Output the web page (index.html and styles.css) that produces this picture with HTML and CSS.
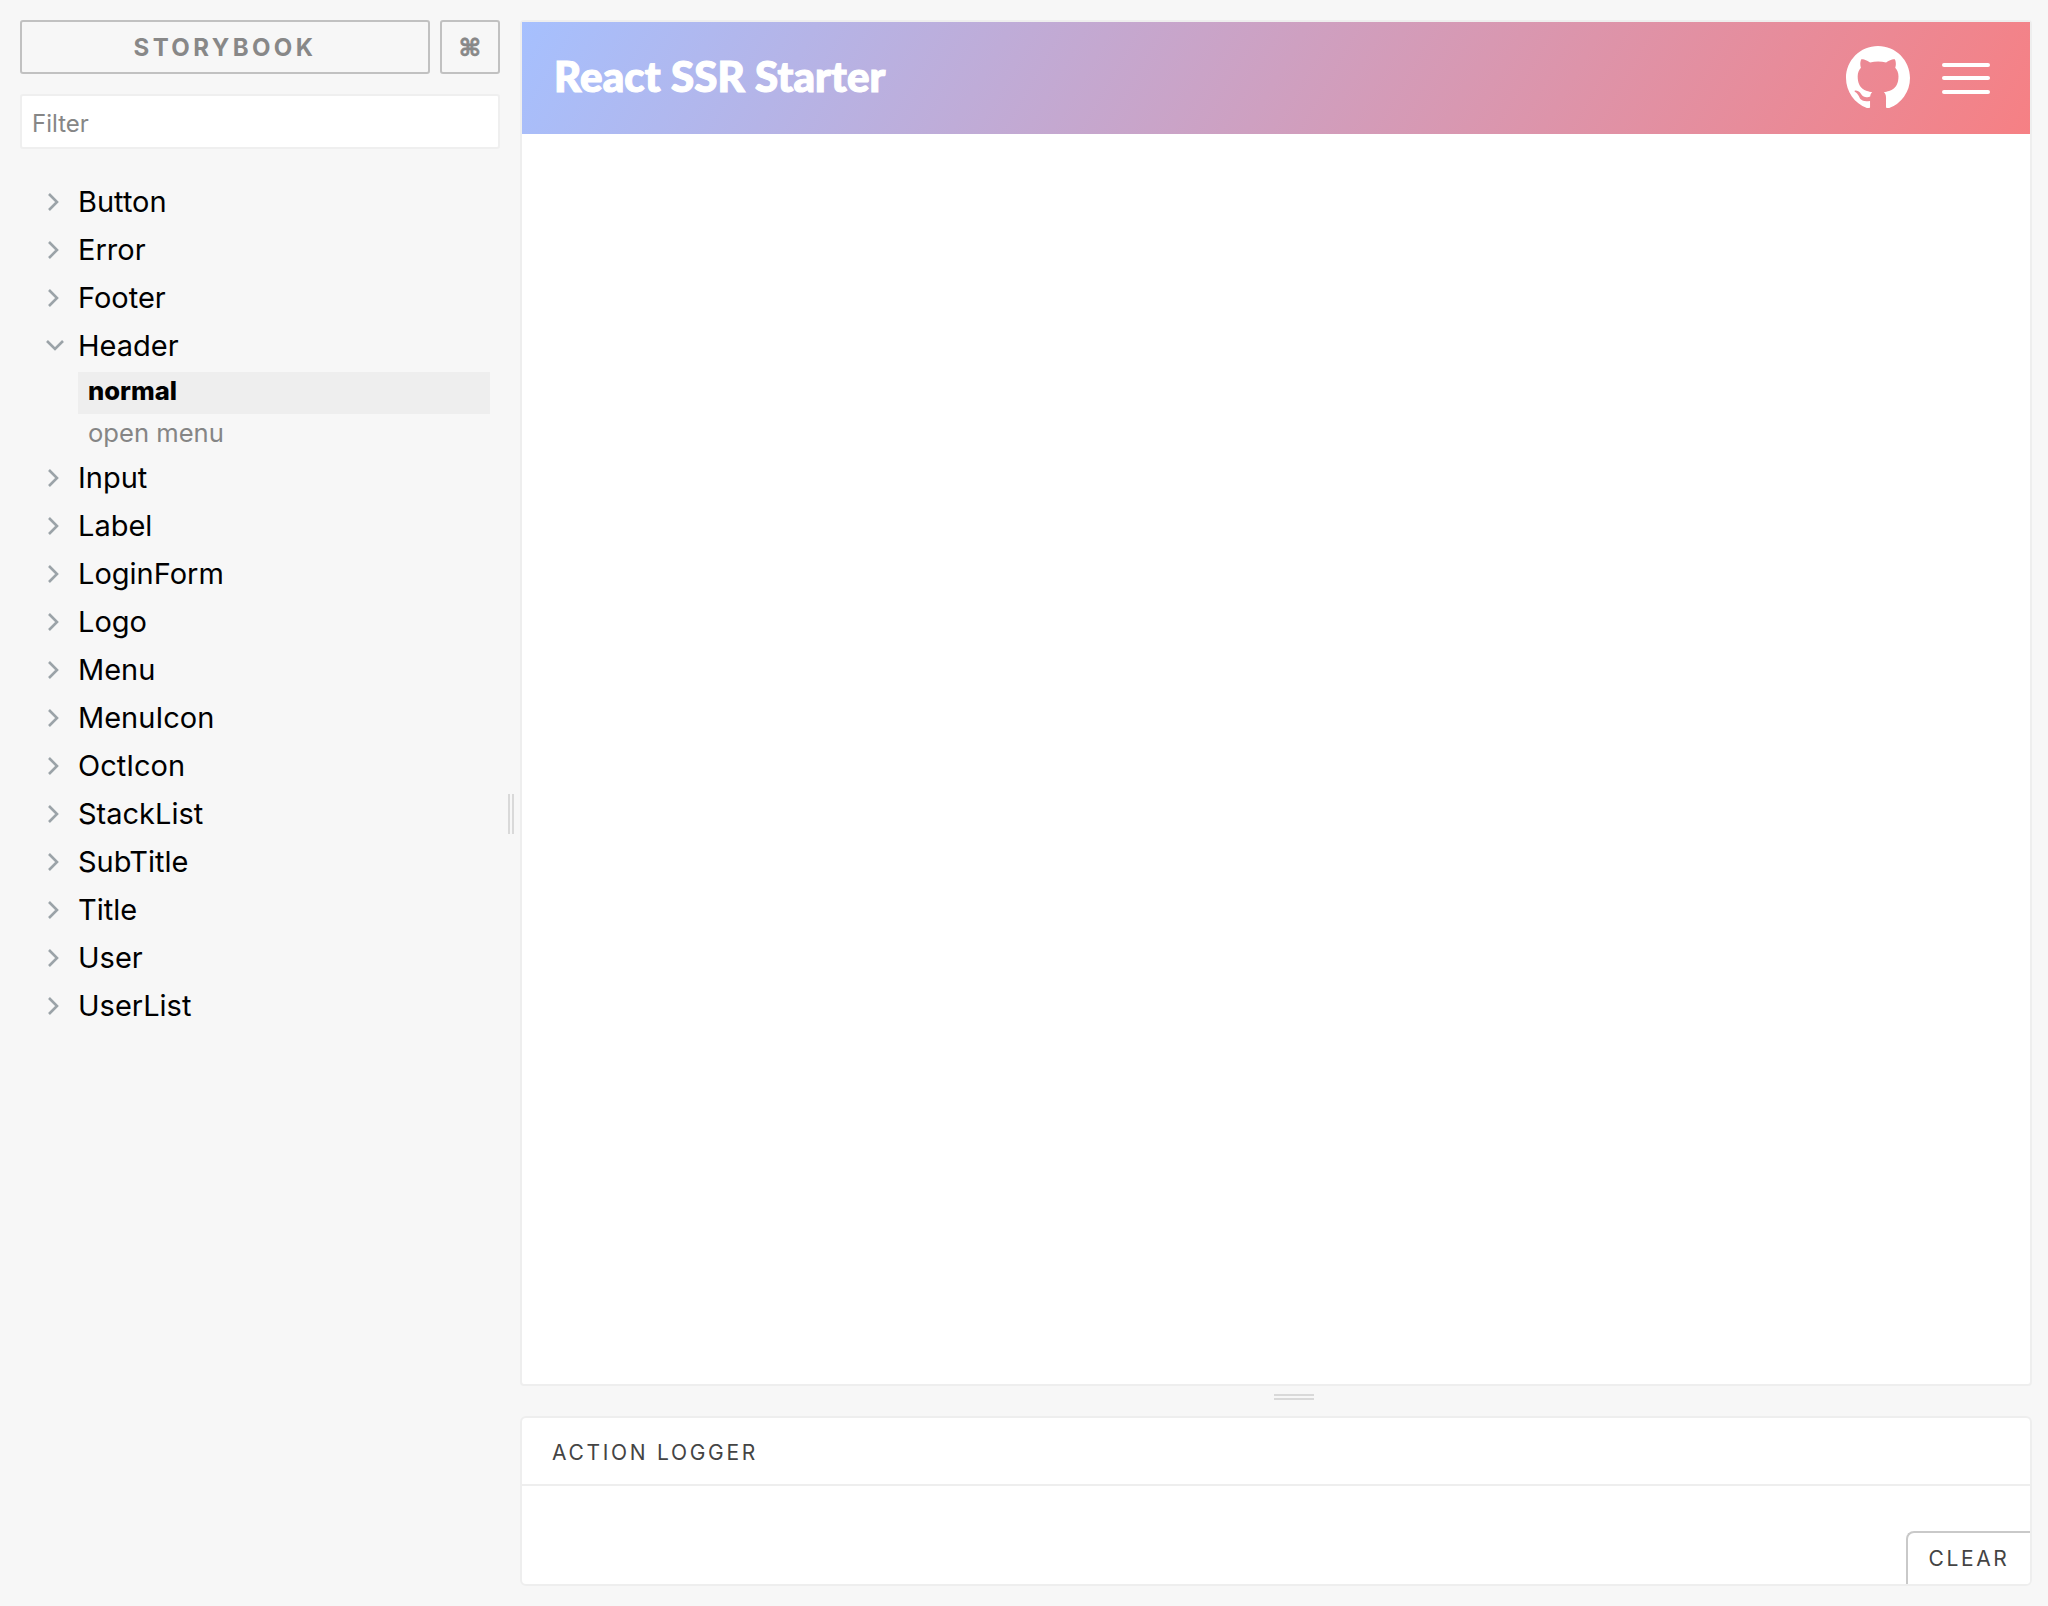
FILE: index.html
```html
<!DOCTYPE html>
<html lang="en">
<head>
<meta charset="utf-8">
<title>Storybook</title>
<link rel="stylesheet" href="styles.css">
</head>
<body>
<div class="app">
  <aside class="sidebar">
    <div class="sidebar-inner">
      <div class="brand">
        <a class="brand-name">STORYBOOK</a>
        <button class="shortcut">⌘</button>
      </div>
      <input class="filter" type="text" placeholder="Filter">
      <ul class="tree">
        <li class="node"><svg class="chev" viewBox="0 0 12 20"><path d="M2 2l8 8-8 8"/></svg>Button</li>
        <li class="node"><svg class="chev" viewBox="0 0 12 20"><path d="M2 2l8 8-8 8"/></svg>Error</li>
        <li class="node"><svg class="chev" viewBox="0 0 12 20"><path d="M2 2l8 8-8 8"/></svg>Footer</li>
        <li class="node"><svg class="chev-open" viewBox="0 0 20 12"><path d="M2 2l8 8 8-8"/></svg>Header</li>
        <li>
          <ul class="stories">
            <li class="story active">normal</li>
            <li class="story">open menu</li>
          </ul>
        </li>
        <li class="node"><svg class="chev" viewBox="0 0 12 20"><path d="M2 2l8 8-8 8"/></svg>Input</li>
        <li class="node"><svg class="chev" viewBox="0 0 12 20"><path d="M2 2l8 8-8 8"/></svg>Label</li>
        <li class="node"><svg class="chev" viewBox="0 0 12 20"><path d="M2 2l8 8-8 8"/></svg>LoginForm</li>
        <li class="node"><svg class="chev" viewBox="0 0 12 20"><path d="M2 2l8 8-8 8"/></svg>Logo</li>
        <li class="node"><svg class="chev" viewBox="0 0 12 20"><path d="M2 2l8 8-8 8"/></svg>Menu</li>
        <li class="node"><svg class="chev" viewBox="0 0 12 20"><path d="M2 2l8 8-8 8"/></svg>MenuIcon</li>
        <li class="node"><svg class="chev" viewBox="0 0 12 20"><path d="M2 2l8 8-8 8"/></svg>OctIcon</li>
        <li class="node"><svg class="chev" viewBox="0 0 12 20"><path d="M2 2l8 8-8 8"/></svg>StackList</li>
        <li class="node"><svg class="chev" viewBox="0 0 12 20"><path d="M2 2l8 8-8 8"/></svg>SubTitle</li>
        <li class="node"><svg class="chev" viewBox="0 0 12 20"><path d="M2 2l8 8-8 8"/></svg>Title</li>
        <li class="node"><svg class="chev" viewBox="0 0 12 20"><path d="M2 2l8 8-8 8"/></svg>User</li>
        <li class="node"><svg class="chev" viewBox="0 0 12 20"><path d="M2 2l8 8-8 8"/></svg>UserList</li>
      </ul>
    </div>
    <div class="v-gutter"><span class="v-grip"></span></div>
  </aside>
  <main class="content">
    <section class="preview">
      <header class="site-header">
        <h1 class="site-title">React SSR Starter</h1>
        <svg class="octicon" viewBox="0 0 16 15.5"><path d="M8 0C3.58 0 0 3.58 0 8c0 3.54 2.29 6.53 5.47 7.59.4.07.55-.17.55-.38 0-.19-.01-.82-.01-1.49-2.01.37-2.53-.49-2.69-.94-.09-.23-.48-.94-.82-1.13-.28-.15-.68-.52-.01-.53.63-.01 1.08.58 1.23.82.72 1.21 1.87.87 2.33.66.07-.52.28-.87.51-1.07-1.78-.2-3.64-.89-3.64-3.95 0-.87.31-1.59.82-2.15-.08-.2-.36-1.02.08-2.12 0 0 .67-.21 2.2.82.64-.18 1.32-.27 2-.27.68 0 1.36.09 2 .27 1.53-1.04 2.2-.82 2.2-.82.44 1.1.16 1.92.08 2.12.51.56.82 1.27.82 2.15 0 3.07-1.87 3.75-3.65 3.95.29.25.54.73.54 1.48 0 1.07-.01 1.93-.01 2.2 0 .21.15.46.55.38A8.013 8.013 0 0016 8c0-4.42-3.58-8-8-8z"/></svg>
        <div class="menu-icon"><span class="bar"></span><span class="bar"></span><span class="bar"></span></div>
      </header>
    </section>
    <div class="h-gutter"><span class="h-grip"></span></div>
    <section class="addon">
      <div class="addon-tabs"><span class="addon-tab">ACTION LOGGER</span></div>
      <div class="addon-body"><button class="clear">CLEAR</button></div>
    </section>
  </main>
</div>
</body>
</html>
```
FILE: styles.css
```css
* { box-sizing: border-box; }
html, body { margin: 0; padding: 0; }
body {
  background: #f7f7f7;
  font-family: Inter, "Liberation Sans", sans-serif;
  color: #000;
}
.app { display: flex; height: 1606px; }
.sidebar { display: flex; width: 520px; flex: none; }
.sidebar-inner { width: 500px; padding: 20px 0 0 20px; flex: none; }
.brand { display: flex; gap: 10px; height: 54px; }
.brand-name {
  flex: 1;
  display: flex; align-items: center; justify-content: center;
  border: 2px solid #c1c1c1;
  border-radius: 3px;
  font-size: 24px; font-weight: 700; letter-spacing: 3.4px;
  color: #888;
}
.shortcut {
  width: 60px; padding: 2px 0 0;
  background: transparent;
  border: 2px solid #c1c1c1;
  border-radius: 3px;
  font-family: "DejaVu Sans", sans-serif;
  font-size: 24px; font-weight: 700;
  -webkit-text-stroke: 0.7px #888;
  color: #888;
}
.filter {
  display: block;
  width: 100%; height: 55px;
  margin-top: 20px;
  padding: 4px 10px 0;
  background: #fff;
  border: 2px solid #efefef;
  border-radius: 3px;
  font-family: inherit; font-size: 24px;
  outline: none;
}
.filter::placeholder { color: #868686; opacity: 1; }
.tree, .stories { list-style: none; margin: 0; padding: 0; }
.tree { margin-top: 29px; }
.node {
  position: relative;
  height: 48px; line-height: 48px;
  padding-left: 58px;
  font-size: 29px;
}
.chev, .chev-open {
  position: absolute;
  fill: none; stroke: #9ba3a8; stroke-width: 2.6;
}
.chev { left: 27px; top: 14px; width: 12px; height: 20px; }
.chev-open { left: 25px; top: 17px; width: 20px; height: 12px; }
.stories { margin: 2px 0 -2px; padding-left: 58px; width: 470px; }
.story {
  height: 42px; line-height: 38px;
  padding-left: 10px;
  font-size: 25.6px;
  color: #858585;
}
.story.active { background: #eee; color: #000; font-weight: 800; }
.v-gutter {
  flex: 1;
  display: flex; align-items: flex-start;
  padding: 794px 0 0 8px;
}
.v-grip {
  display: block; width: 6px; height: 40px;
  border-left: 2px solid #d9d9d9;
  border-right: 2px solid #d9d9d9;
}
.content {
  flex: 1; min-width: 0;
  display: flex; flex-direction: column;
  padding: 20px 16px 20px 0;
}
.preview {
  flex: 1;
  background: #fff;
  border: 2px solid #eee;
  border-radius: 4px;
}
.site-header {
  display: flex; align-items: center;
  height: 112px;
  padding: 0 40px 0 32px;
  background: linear-gradient(120deg, #a6c0fe 0%, #f68084 100%);
}
.site-title {
  flex: 1;
  margin: 0 0 5px;
  font-family: Lato, sans-serif;
  font-size: 42px; font-weight: 900; letter-spacing: 0.15px;
  -webkit-text-stroke: 1.2px #fff;
  color: #fff;
}
.octicon { width: 64px; height: 62px; fill: #fff; margin: 0 32px 2px 0; }
.menu-icon { display: flex; flex-direction: column; gap: 9.5px; width: 48px; }
.bar { display: block; height: 4px; background: #fff; border-radius: 2px; }
.h-gutter { height: 30px; flex: none; display: flex; justify-content: center; padding: 8px 0 0 36px; }
.h-grip {
  display: block; width: 40px; height: 6px;
  border-top: 2px solid #d9d9d9;
  border-bottom: 2px solid #d9d9d9;
}
.addon {
  flex: none; height: 170px;
  display: flex; flex-direction: column;
  background: #fff;
  border: 2px solid #eee;
  border-radius: 6px;
  overflow: hidden;
}
.addon-tabs {
  height: 68px; flex: none;
  display: flex; align-items: center;
  padding: 2px 0 0 30px;
  border-bottom: 2px solid #eee;
}
.addon-tab { font-size: 21px; letter-spacing: 2.7px; color: #444; }
.addon-body { flex: 1; display: flex; justify-content: flex-end; align-items: flex-end; }
.clear {
  width: 124px; height: 53px;
  padding: 0;
  background: #fff;
  border: solid #c9c9c9;
  border-width: 2px 0 0 2px;
  border-radius: 8px 0 0 0;
  font-family: inherit; font-size: 21px; letter-spacing: 2.6px;
  color: #444;
}
```
